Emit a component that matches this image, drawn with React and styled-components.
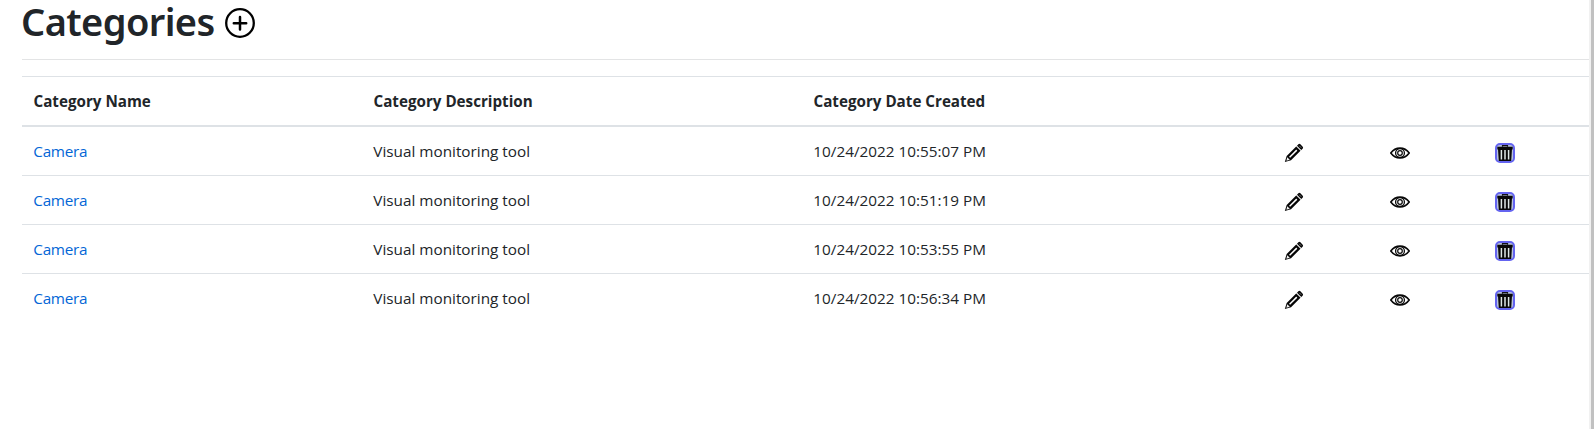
import React from "react";
import styled, { createGlobalStyle } from "styled-components";

const Global = createGlobalStyle`
  *, *::before, *::after { box-sizing: border-box; }
  html, body { margin: 0; background: #fff; }
  body {
    overflow: hidden;
    font: 400 15.3px/24px "Open Sans", "Noto Sans", sans-serif;
    color: #212529;
  }
`;

const Page = styled.div`
  display: flex;
  height: 100vh;
`;

const Main = styled.main`
  flex: 1;
  min-width: 0;
  padding-left: 22px;
`;

const ScrollTrack = styled.div`
  width: 5px;
  padding-left: 2px;
  background: #f1f1f1;
`;

const ScrollThumb = styled.div`
  height: 100%;
  background: #c1c1c1;
`;

const Header = styled.header`
  display: flex;
  align-items: flex-start;
  height: 60px;
  border-bottom: 1px solid #e3e4e5;
`;

const Title = styled.h1`
  width: 203px;
  margin: 0;
  font: 600 38px/42px "Noto Sans", sans-serif;
  letter-spacing: -0.6px;
  text-indent: -1px;
  white-space: nowrap;
`;

const AddButton = styled.button`
  display: block;
  margin: 8px 0 0;
  padding: 0;
  border: 0;
  background: none;
  svg { display: block; }
`;

const Table = styled.table`
  width: 100%;
  margin-top: 16px;
  table-layout: fixed;
  border-collapse: separate;
  border-spacing: 0;
`;

const Col = styled.col`
  width: ${(p) => p.$width}px;
`;

const HeadCell = styled.th`
  height: 51px;
  padding: 12px 11.5px;
  border-top: 1px solid #dee2e6;
  border-bottom: 2px solid #dee2e6;
  font-size: 15.2px;
  font-weight: 700;
  text-align: left;
  white-space: nowrap;
`;

const Cell = styled.td`
  height: ${(p) => (p.$first ? 48 : 49)}px;
  padding: 0 11.3px;
  border-top: ${(p) => (p.$first ? "0" : "1px solid #dee2e6")};
  white-space: nowrap;
`;

const IconCell = styled(Cell)`
  padding: 0 12px;
  line-height: 0;
  svg { display: block; margin-top: 4px; }
`;

const CategoryLink = styled.a`
  color: #0366d6;
  letter-spacing: -0.3px;
  text-decoration: none;
`;

const DeleteButton = styled.button`
  display: block;
  width: 20px;
  height: 20px;
  margin-top: 4px;
  padding: 0;
  border: 2px solid #6464f0;
  border-radius: 5px;
  background: #b9c3dc;
  && svg { display: block; margin: 0; }
`;

const PlusIcon = () => (
  <svg width="30" height="30" viewBox="0 0 30 30" fill="none" stroke="#000">
    <circle cx="15" cy="15" r="13.8" strokeWidth="2.3" />
    <path d="M15 9v12.4M8.8 15.2h12.4" strokeWidth="2.5" strokeLinecap="round" />
  </svg>
);

const PencilIcon = () => (
  <svg width="20" height="20" viewBox="0 0 20 20">
    <path d="M.8 19 2.7 13 12.2 3.5 16.5 7.8 7 17.2z" fill="#050505" />
    <path d="M13 2.7 14.4 1.3q1-.9 2 0l2.3 2.4q.9 1-.1 2L17.3 7z" fill="#050505" />
    <path d="M12.4 3.2l4.4 4.4" stroke="#aaa" strokeWidth=".8" />
    <path d="M5.6 14.2l7.2-7.1" stroke="#fff" strokeWidth="1.5" />
    <path d="M3.2 14.2l2.6 2.5-3.4 1.1z" fill="#eee" />
    <path d="M15.2 2.7l2 2" stroke="#888" strokeWidth=".9" />
  </svg>
);

const EyeIcon = () => (
  <svg width="20" height="20" viewBox="0 0 20 20" fill="none" stroke="#080808">
    <path d="M.8 10C5.5 3.5 14.5 3.5 19.2 10C14.5 16.5 5.5 16.5.8 10z" strokeWidth="1.6" />
    <circle cx="10" cy="10" r="4.4" strokeWidth="1.3" />
    <circle cx="10" cy="10" r="2.3" strokeWidth="1.2" />
  </svg>
);

const TrashIcon = () => (
  <svg width="16" height="16" viewBox="0 0 16 16">
    <path d="M5.5 1.8V.6h5v1.2" fill="none" stroke="#111" strokeWidth="1.2" />
    <path d="M.3 1.7h15.4v2.8H.3zM1 4h14l-.8 12H1.8z" fill="#080808" />
    <path d="M4.4 5v9.4M8 5v9.4M11.6 5v9.4" stroke="#dfe8e6" strokeWidth="1.5" />
  </svg>
);

const columns = [340, 440, 470, 106, 105, 106];
const headings = ["Category Name", "Category Description", "Category Date Created", "", "", ""];
const categories = [
  { name: "Camera", description: "Visual monitoring tool", created: "10/24/2022 10:55:07 PM" },
  { name: "Camera", description: "Visual monitoring tool", created: "10/24/2022 10:51:19 PM" },
  { name: "Camera", description: "Visual monitoring tool", created: "10/24/2022 10:53:55 PM" },
  { name: "Camera", description: "Visual monitoring tool", created: "10/24/2022 10:56:34 PM" },
];

export default function App() {
  return (
    <>
      <Global />
      <Page>
        <Main>
          <Header>
            <Title>Categories</Title>
            <AddButton aria-label="Add category"><PlusIcon /></AddButton>
          </Header>
          <Table>
            <colgroup>
              {columns.map((w, i) => <Col key={i} $width={w} />)}
            </colgroup>
            <thead>
              <tr>{headings.map((h, i) => <HeadCell key={i}>{h}</HeadCell>)}</tr>
            </thead>
            <tbody>
              {categories.map((c, i) => (
                <tr key={c.created}>
                  <Cell $first={i === 0}><CategoryLink>{c.name}</CategoryLink></Cell>
                  <Cell $first={i === 0}>{c.description}</Cell>
                  <Cell $first={i === 0}>{c.created}</Cell>
                  <IconCell $first={i === 0}><PencilIcon /></IconCell>
                  <IconCell $first={i === 0}><EyeIcon /></IconCell>
                  <IconCell $first={i === 0}>
                    <DeleteButton aria-label="Delete"><TrashIcon /></DeleteButton>
                  </IconCell>
                </tr>
              ))}
            </tbody>
          </Table>
        </Main>
        <ScrollTrack><ScrollThumb /></ScrollTrack>
      </Page>
    </>
  );
}
